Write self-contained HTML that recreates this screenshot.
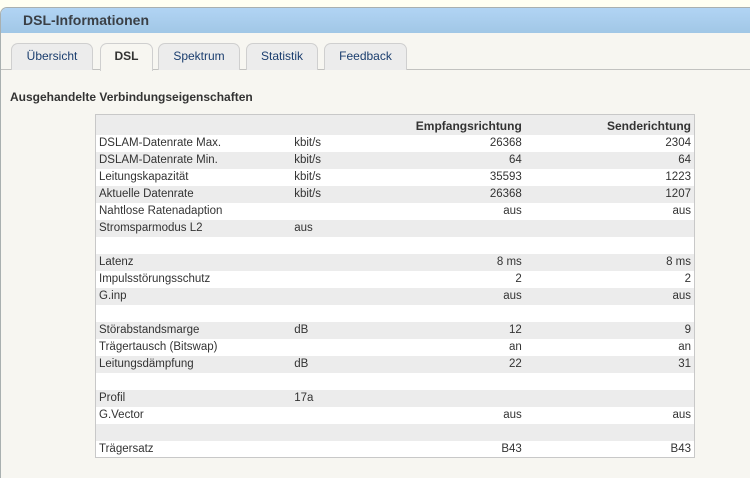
<!DOCTYPE html>
<html><head><meta charset="utf-8"><style>
*{margin:0;padding:0;box-sizing:border-box}
html,body{width:750px;height:478px;overflow:hidden}
body{background:#fffff2;font-family:"Liberation Sans",Arial,sans-serif;position:relative}
#frame{position:absolute;left:0;top:7px;width:750px;height:471px;background:#f7f6f1;border:1px solid #a9b0b0;border-right:none;border-bottom:none;border-radius:7px 0 0 0;overflow:hidden}
#hdr{height:25px;background:linear-gradient(#b1d4f4,#a1c7e6);color:#3a3f45;font-weight:bold;font-size:14px;padding:4px 0 0 22px}
#tabline{position:absolute;left:0;top:61px;width:760px;height:1px;background:#c2c2c0}
.tab{position:absolute;top:35px;height:27px;background:#ececec;border:1px solid #cfcfcf;border-bottom:none;border-radius:7px 7px 0 0;font-size:12px;color:#1a3d6e;text-align:center;padding-top:5px}
.tab.act{background:#f7f6f1;height:28px;color:#333;font-weight:bold;z-index:2}
h2{position:absolute;left:9px;top:82px;font-size:12px;font-weight:bold;color:#333}
table{position:absolute;left:94px;top:106px;width:600px;border:1px solid #c8c8c8;border-collapse:collapse;font-size:11.5px;color:#333}
td,th{height:17px;padding:0 3px;white-space:nowrap}
th{font-weight:bold;text-align:right;font-size:12px;height:20px;padding-top:3px}
tr:nth-child(odd){background:#ececec}
tr:nth-child(even){background:#fff}
td.r{text-align:right}
</style></head><body>
<div id="frame">
<div id="hdr">DSL-Informationen</div>
<div id="tabline"></div>
<div class="tab" style="left:10px;width:82px">Übersicht</div>
<div class="tab act" style="left:99px;width:53px">DSL</div>
<div class="tab" style="left:157px;width:82px">Spektrum</div>
<div class="tab" style="left:245px;width:72px">Statistik</div>
<div class="tab" style="left:323px;width:83px">Feedback</div>
<h2>Ausgehandelte Verbindungseigenschaften</h2>
<table>
<colgroup><col style="width:196px"><col style="width:100px"><col style="width:134px"><col style="width:170px"></colgroup>
<tr><th></th><th></th><th>Empfangsrichtung</th><th>Senderichtung</th></tr>
<tr><td>DSLAM-Datenrate Max.</td><td>kbit/s</td><td class="r">26368</td><td class="r">2304</td></tr>
<tr><td>DSLAM-Datenrate Min.</td><td>kbit/s</td><td class="r">64</td><td class="r">64</td></tr>
<tr><td>Leitungskapazität</td><td>kbit/s</td><td class="r">35593</td><td class="r">1223</td></tr>
<tr><td>Aktuelle Datenrate</td><td>kbit/s</td><td class="r">26368</td><td class="r">1207</td></tr>
<tr><td>Nahtlose Ratenadaption</td><td></td><td class="r">aus</td><td class="r">aus</td></tr>
<tr><td>Stromsparmodus L2</td><td>aus</td><td></td><td></td></tr>
<tr><td></td><td></td><td></td><td></td></tr>
<tr><td>Latenz</td><td></td><td class="r">8 ms</td><td class="r">8 ms</td></tr>
<tr><td>Impulsstörungsschutz</td><td></td><td class="r">2</td><td class="r">2</td></tr>
<tr><td>G.inp</td><td></td><td class="r">aus</td><td class="r">aus</td></tr>
<tr><td></td><td></td><td></td><td></td></tr>
<tr><td>Störabstandsmarge</td><td>dB</td><td class="r">12</td><td class="r">9</td></tr>
<tr><td>Trägertausch (Bitswap)</td><td></td><td class="r">an</td><td class="r">an</td></tr>
<tr><td>Leitungsdämpfung</td><td>dB</td><td class="r">22</td><td class="r">31</td></tr>
<tr><td></td><td></td><td></td><td></td></tr>
<tr><td>Profil</td><td>17a</td><td></td><td></td></tr>
<tr><td>G.Vector</td><td></td><td class="r">aus</td><td class="r">aus</td></tr>
<tr><td></td><td></td><td></td><td></td></tr>
<tr><td>Trägersatz</td><td></td><td class="r">B43</td><td class="r">B43</td></tr>
</table>
</div>
</body></html>
